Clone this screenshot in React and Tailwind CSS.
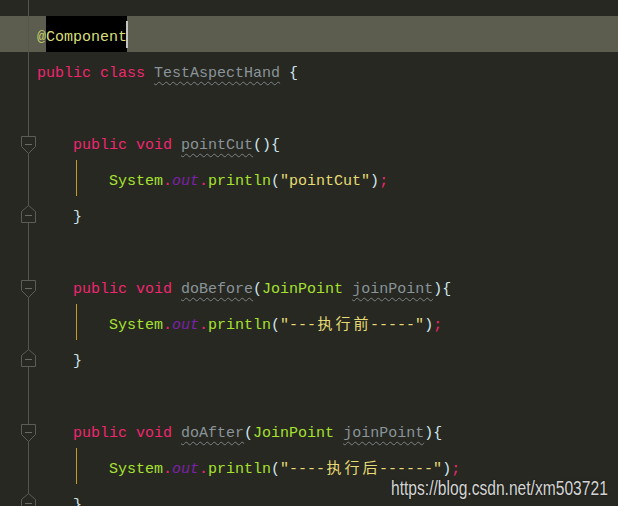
import React from 'react';

const mono = { fontFamily: '"Liberation Mono", "Noto Sans CJK SC", monospace' };

const Gutter = ({ kind = 'line', h = 36 }) => (
  <svg width="37" height={h} className="shrink-0 block">
    <line x1="28.5" y1="0" x2="28.5" y2={h} stroke="#55554d" strokeWidth="1" />
    {kind === 'start' && (
      <g>
        <path d="M21.5 12.5 H35.5 V22.5 L28.5 29.5 L21.5 22.5 Z" fill="#272822" stroke="#5d5d55" />
        <line x1="25" y1="20.5" x2="32" y2="20.5" stroke="#6a6a62" />
      </g>
    )}
    {kind === 'end' && (
      <g>
        <path d="M28.5 9.5 L35.5 15.5 V26.5 H21.5 V15.5 Z" fill="#272822" stroke="#5d5d55" />
        <line x1="25" y1="19.5" x2="32" y2="19.5" stroke="#6a6a62" />
      </g>
    )}
  </svg>
);

const K = ({ children }) => <span className="text-[#f0266f]">{children}</span>;
const G = ({ children }) => <span className="text-[#a6e22e]">{children}</span>;
const P = ({ children }) => <span className="text-[#cfe6ee]">{children}</span>;
const W = ({ children }) => (
  <span className="text-[#8a9499] underline decoration-wavy decoration-[#7d8386] decoration-1 underline-offset-[4px]">
    {children}
  </span>
);
const S = ({ children }) => <span className="text-[#e6db74]">{children}</span>;
const Cjk = ({ children }) => (
  <span
    className="inline-block w-[18px] text-center leading-[15px]"
    style={{ fontFamily: '"Noto Sans CJK SC", sans-serif' }}
  >
    {children}
  </span>
);

const Row = ({ kind, children }) => (
  <div className="flex h-[36px]">
    <Gutter kind={kind} />
    <div className="pt-[8px] leading-[28px] whitespace-pre">{children}</div>
  </div>
);

const Body = ({ children }) => (
  <div className="flex h-[36px]">
    <Gutter />
    <div className="w-[39px] shrink-0" />
    <div className="w-px bg-[#c99a1e] shrink-0" />
    <div className="w-[32px] shrink-0" />
    <div className="pt-[8px] leading-[28px] whitespace-pre">{children}</div>
  </div>
);

const Println = ({ children }) => (
  <>
    <G>System</G>
    <K>.</K>
    <span className="italic text-[#7b22a8]">out</span>
    <K>.</K>
    <G>println</G>
    <P>(</P>
    <S>{children}</S>
    <P>)</P>
    <K>;</K>
  </>
);

export default function App() {
  return (
    <div className="relative w-[618px] h-[506px] overflow-hidden bg-[#272822] text-[15px]" style={mono}>
      <div className="flex h-[16px]">
        <Gutter h={16} />
      </div>

      {/* current line */}
      <div className="flex h-[36px] bg-[#5c5c4f]">
        <Gutter />
        <div className="flex leading-[28px]">
          <span className="pt-[8px] text-[#c2cc66]">@</span>
          <span className="pt-[8px] bg-black text-[#d8df7a]">Component</span>
          <span className="w-[2px] h-[27px] mt-[5px] -ml-[1px] bg-[#c4c4c4]" />
        </div>
      </div>

      <Row>
        <K>public</K> <K>class</K> <W>TestAspectHand</W> <P>{'{'}</P>
      </Row>
      <Row />

      <Row kind="start">
        {'    '}<K>public</K> <K>void</K> <W>pointCut</W><P>(){'{'}</P>
      </Row>
      <Body>
        <Println>"pointCut"</Println>
      </Body>
      <Row kind="end">
        {'    '}<P>{'}'}</P>
      </Row>
      <Row />

      <Row kind="start">
        {'    '}<K>public</K> <K>void</K> <W>doBefore</W><P>(</P><G>JoinPoint</G> <W>joinPoint</W><P>){'{'}</P>
      </Row>
      <Body>
        <Println>
          "---<Cjk>执</Cjk><Cjk>行</Cjk><Cjk>前</Cjk>-----"
        </Println>
      </Body>
      <Row kind="end">
        {'    '}<P>{'}'}</P>
      </Row>
      <Row />

      <Row kind="start">
        {'    '}<K>public</K> <K>void</K> <W>doAfter</W><P>(</P><G>JoinPoint</G> <W>joinPoint</W><P>){'{'}</P>
      </Row>
      <Body>
        <Println>
          "----<Cjk>执</Cjk><Cjk>行</Cjk><Cjk>后</Cjk>------"
        </Println>
      </Body>
      <Row kind="end">
        {'    '}<P>{'}'}</P>
      </Row>

      {/* watermark */}
      <div
        className="absolute left-[391px] top-[475px] text-[20px] leading-[26px] text-[#d4d4d4] origin-left scale-x-[0.78] whitespace-nowrap [text-shadow:0_0_2px_rgba(0,0,0,0.6)]"
        style={{ fontFamily: '"Liberation Sans", Arial, sans-serif' }}
      >
        https://blog.csdn.net/xm503721
      </div>
    </div>
  );
}
